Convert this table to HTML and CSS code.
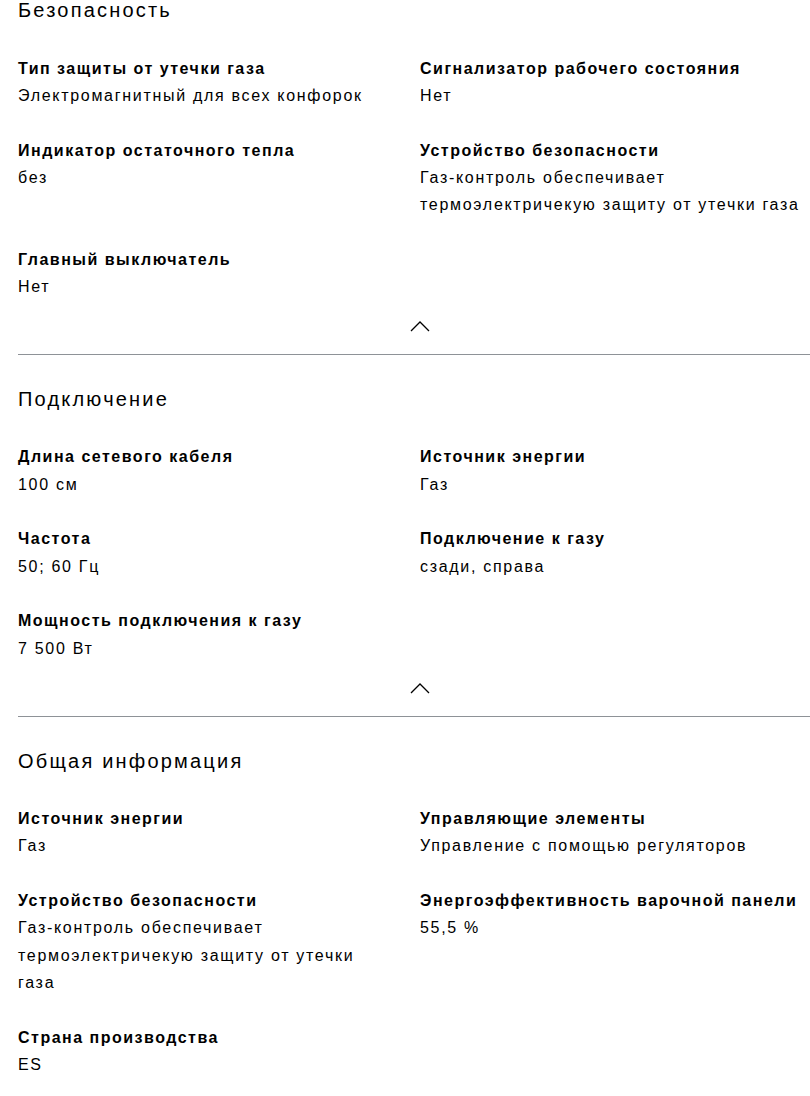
FILE: index.html
```html
<!DOCTYPE html>
<html lang="ru">
<head>
<meta charset="utf-8">
<title>Характеристики</title>
<link rel="stylesheet" href="styles.css">
</head>
<body>
<main class="page">
  <section class="group">
    <h2 class="group-title group-title--first">Безопасность</h2>
    <dl class="specs">
      <div class="spec"><dt class="spec-label">Тип защиты от утечки газа</dt><dd class="spec-value">Электромагнитный для всех конфорок</dd></div>
      <div class="spec"><dt class="spec-label">Сигнализатор рабочего состояния</dt><dd class="spec-value">Нет</dd></div>
      <div class="spec"><dt class="spec-label">Индикатор остаточного тепла</dt><dd class="spec-value">без</dd></div>
      <div class="spec"><dt class="spec-label">Устройство безопасности</dt><dd class="spec-value">Газ-контроль обеспечивает термоэлектричекую защиту от утечки газа</dd></div>
      <div class="spec"><dt class="spec-label">Главный выключатель</dt><dd class="spec-value">Нет</dd></div>
    </dl>
    <button class="toggle" type="button" aria-label="Свернуть">
      <svg width="20" height="11" viewBox="0 0 20 11"><path d="M1 10 L10 1 L19 10" fill="none" stroke="#000" stroke-width="1.3"/></svg>
    </button>
  </section>
  <section class="group">
    <h2 class="group-title">Подключение</h2>
    <dl class="specs">
      <div class="spec"><dt class="spec-label">Длина сетевого кабеля</dt><dd class="spec-value">100 см</dd></div>
      <div class="spec"><dt class="spec-label">Источник энергии</dt><dd class="spec-value">Газ</dd></div>
      <div class="spec"><dt class="spec-label">Частота</dt><dd class="spec-value">50; 60 Гц</dd></div>
      <div class="spec"><dt class="spec-label">Подключение к газу</dt><dd class="spec-value">сзади, справа</dd></div>
      <div class="spec"><dt class="spec-label">Мощность подключения к газу</dt><dd class="spec-value">7 500 Вт</dd></div>
    </dl>
    <button class="toggle" type="button" aria-label="Свернуть">
      <svg width="20" height="11" viewBox="0 0 20 11"><path d="M1 10 L10 1 L19 10" fill="none" stroke="#000" stroke-width="1.3"/></svg>
    </button>
  </section>
  <section class="group group--last">
    <h2 class="group-title">Общая информация</h2>
    <dl class="specs">
      <div class="spec"><dt class="spec-label">Источник энергии</dt><dd class="spec-value">Газ</dd></div>
      <div class="spec"><dt class="spec-label">Управляющие элементы</dt><dd class="spec-value">Управление с помощью регуляторов</dd></div>
      <div class="spec"><dt class="spec-label">Устройство безопасности</dt><dd class="spec-value">Газ-контроль обеспечивает термоэлектричекую защиту от утечки газа</dd></div>
      <div class="spec"><dt class="spec-label">Энергоэффективность варочной панели</dt><dd class="spec-value">55,5 %</dd></div>
      <div class="spec"><dt class="spec-label">Страна производства</dt><dd class="spec-value">ES</dd></div>
    </dl>
  </section>
</main>
</body>
</html>
```

FILE: styles.css
```css
html, body {
  margin: 0;
  padding: 0;
  overflow: hidden;
  background: #fff;
}

body {
  font-family: "Liberation Sans", Arial, sans-serif;
  color: #000;
}

.page {
  margin-left: 18px;
  margin-right: -12px;
}

.group {
  padding-top: 29px;
  border-bottom: 1px solid #8e9297;
}

.group:first-child {
  padding-top: 0;
}

.group--last {
  border-bottom: none;
}

.group-title {
  margin: 0 0 29.6px;
  font-size: 20px;
  line-height: 30px;
  font-weight: 400;
  letter-spacing: 2.2px;
}

.group-title--first {
  margin-top: -5px;
}

.specs {
  margin: 0;
  display: grid;
  grid-template-columns: 370px 1fr;
  column-gap: 32px;
  row-gap: 27.6px;
}

.spec-label {
  font-size: 16px;
  line-height: 27.2px;
  font-weight: 700;
  letter-spacing: 1.5px;
  white-space: nowrap;
}

.spec-value {
  margin: 0;
  font-size: 16px;
  line-height: 27.2px;
  letter-spacing: 1.7px;
}

.toggle {
  display: flex;
  align-items: center;
  justify-content: center;
  width: 100%;
  height: 24px;
  margin: 14.6px 0 15.1px;
  padding: 0;
  border: none;
  background: none;
}
```
